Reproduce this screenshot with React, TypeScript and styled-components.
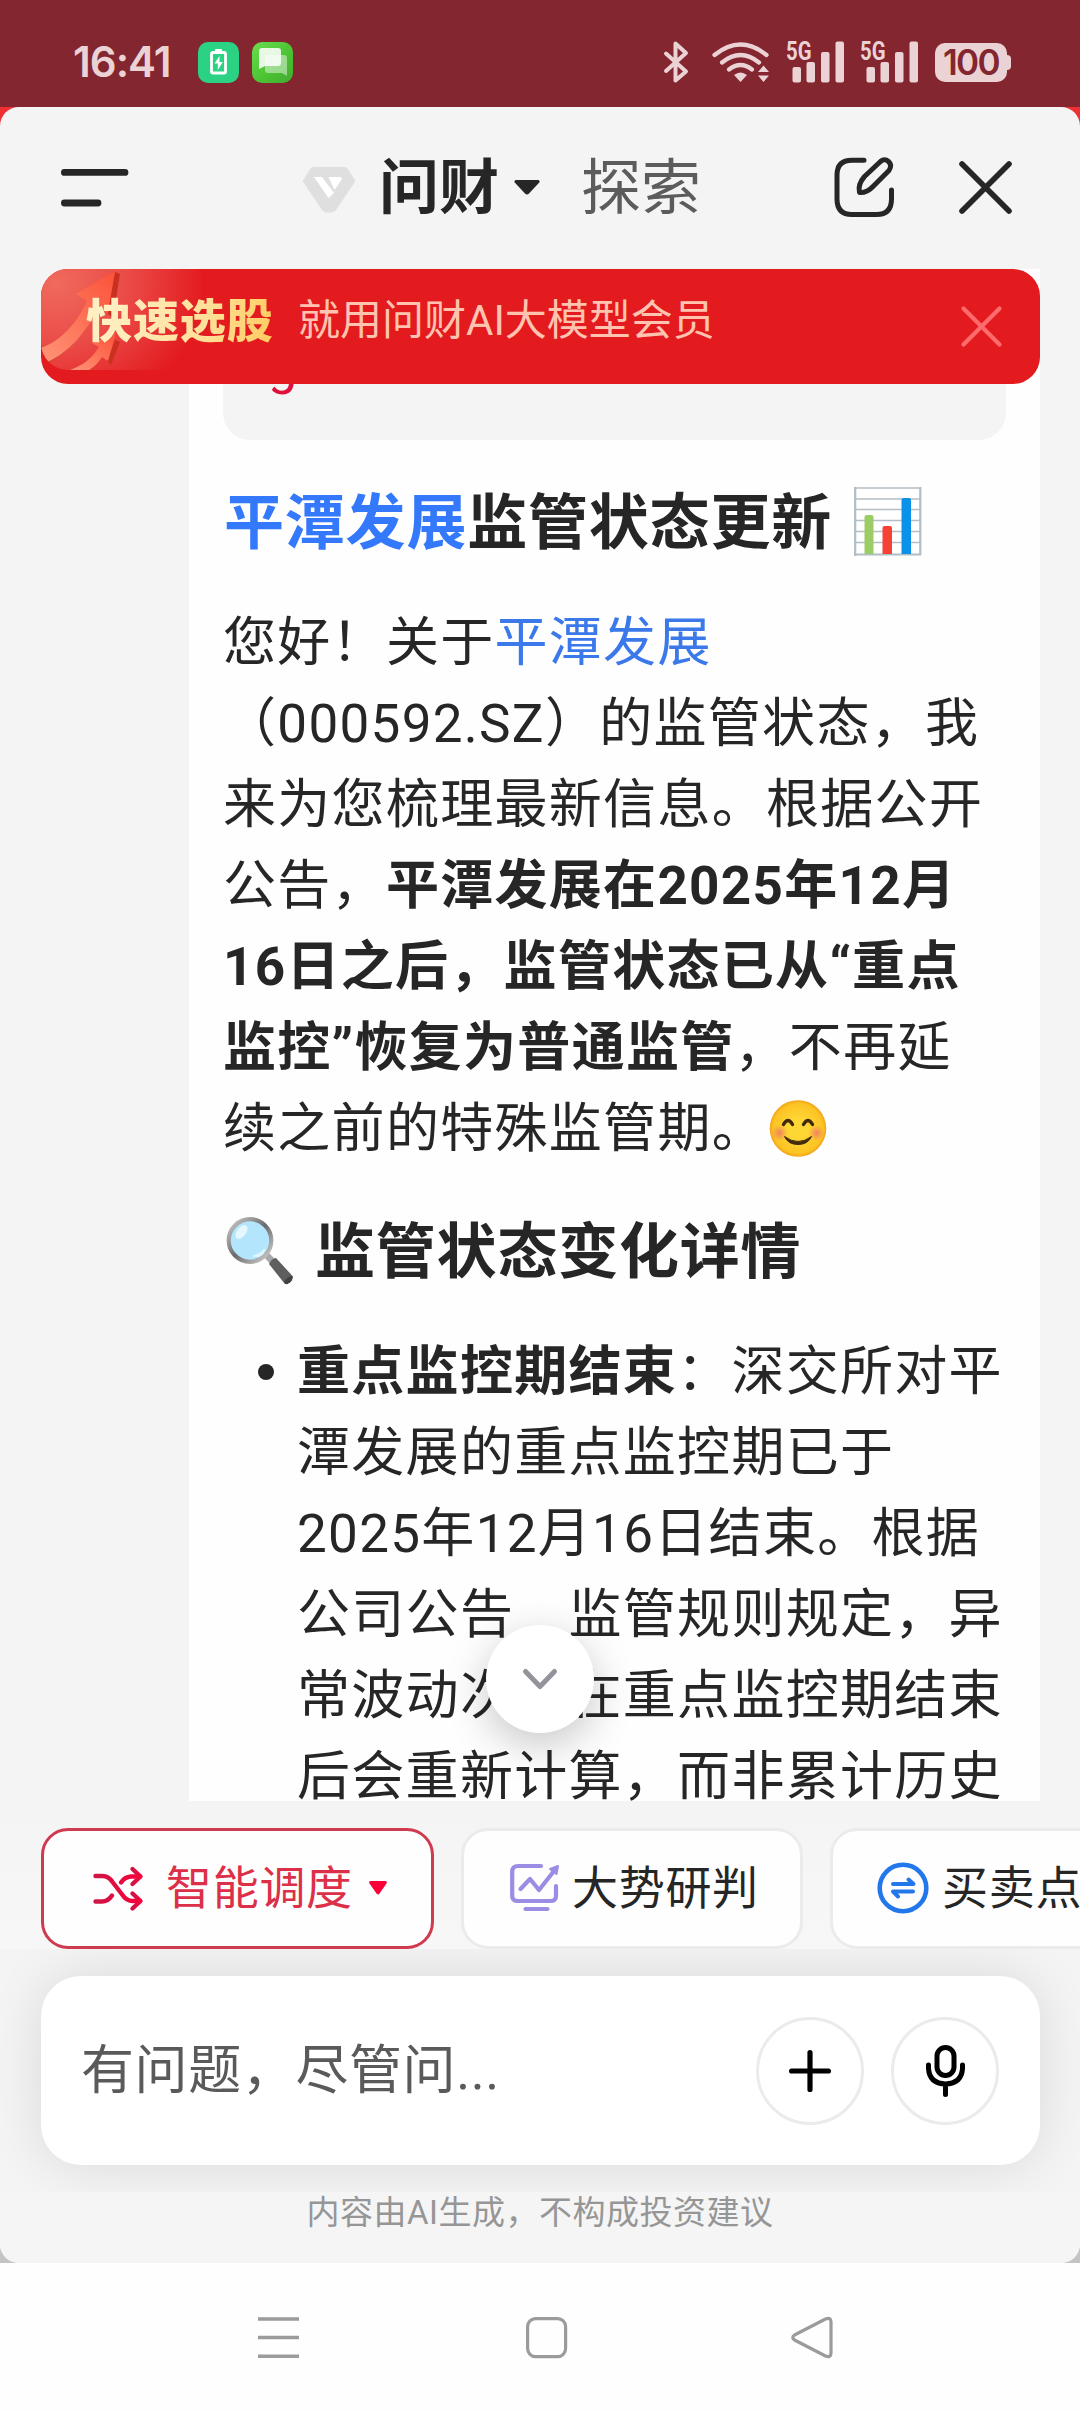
import React from 'react';
import styled, { createGlobalStyle, css } from 'styled-components';

const INK = '#262626';
const STATUS = '#ebd3d5';

const GlobalStyle = createGlobalStyle`
  *, *::before, *::after { box-sizing: border-box; }
  html, body { margin: 0; padding: 0; }
  body {
    font-family: Roboto, "Noto Sans CJK SC", sans-serif;
    color: ${INK};
    text-spacing-trim: space-all;
    -webkit-font-smoothing: antialiased;
  }
  svg { display: block; flex: none; overflow: visible; }
  h2, p, ul { margin: 0; padding: 0; }
`;

const Screen = styled.div`
  width: 1080px;
  height: 2412px;
  display: flex;
  flex-direction: column;
  overflow: hidden;
  background: #fefefe;
`;

/* ---------- status bar ---------- */
const StatusBar = styled.div`
  height: 107px;
  flex: none;
  display: flex;
  justify-content: space-between;
  padding: 41px 73px 0 73px;
  background: #83262f;
  color: ${STATUS};
`;
const StatusGroup = styled.div`
  display: flex;
  height: 42px;
  align-items: center;
`;
const Clock = styled.span`
  width: 125px;
  font: 600 42px/42px Inter, sans-serif;
  letter-spacing: -1px;
  white-space: nowrap;
`;
const AppBadge = styled.span<{ $bg: string }>`
  width: 41px;
  height: 41px;
  margin-right: 13px;
  border-radius: 10px;
  background: ${p => p.$bg};
  display: flex;
  align-items: center;
  justify-content: center;
`;
const BatteryPill = styled.span`
  position: relative;
  width: 72px;
  height: 39px;
  margin-left: 17px;
  border-radius: 10px;
  background: ${STATUS};
  color: #83262f;
  font: 600 35px/39px Inter, sans-serif;
  letter-spacing: -1.6px;
  text-align: center;
  &::after {
    content: '';
    position: absolute;
    right: -4px;
    top: 12px;
    width: 5px;
    height: 15px;
    border-radius: 0 4px 4px 0;
    background: ${STATUS};
  }
`;

/* ---------- panel ---------- */
const PanelBack = styled.div`
  flex: none;
  height: 2156px;
  background: linear-gradient(#ee2f33 0, #ee2f33 60px, #c4c4c4 61px);
`;
const Panel = styled.main`
  position: relative;
  height: 100%;
  display: flex;
  flex-direction: column;
  border-radius: 19px;
  overflow: hidden;
  background: #f4f4f4;
`;
const Header = styled.header`
  flex: none;
  height: 162px;
  display: flex;
  align-items: flex-start;
  padding: 50px 66px 0 61px;
`;
const HeaderSlot = styled.div<{ $ml: number; $mt?: number }>`
  margin-left: ${p => p.$ml}px;
  margin-top: ${p => p.$mt ?? 0}px;
`;
const Tab = styled.span<{ $active?: boolean }>`
  width: 121px;
  font-size: 60px;
  line-height: 64px;
  white-space: nowrap;
  font-weight: ${p => (p.$active ? 700 : 400)};
  color: ${p => (p.$active ? INK : '#5c5c5c')};
`;

/* ---------- promo banner ---------- */
const Banner = styled.aside`
  position: absolute;
  z-index: 3;
  left: 41px;
  top: 162px;
  width: 999px;
  height: 115px;
  display: flex;
  padding-left: 45px;
  border-radius: 27px;
  overflow: hidden;
  background: #e31b1f;
`;
const BannerArt = styled.div`
  position: absolute;
  left: 0;
  top: 0;
  width: 160px;
  height: 101px;
  border-radius: 0 0 0 27px;
  overflow: hidden;
  background: radial-gradient(ellipse 150px 130px at 14px 14px, #f06a5c 0, #ea4a46 50%, #e31b1f 100%);
`;
const BannerTitle = styled.strong`
  position: relative;
  width: 212px;
  font-size: 46px;
  line-height: 104px;
  font-weight: 900;
  letter-spacing: 0.9px;
  white-space: nowrap;
  color: transparent;
  background: linear-gradient(100deg, #fff0c4 10%, #ffe09a 55%, #ffc95c 88%);
  background-clip: text;
  -webkit-background-clip: text;
`;
const BannerText = styled.span`
  width: 663px;
  font-size: 42px;
  line-height: 104px;
  white-space: nowrap;
  color: #ffc3b0;
`;
const BannerClose = styled.div`
  padding-top: 37px;
`;

/* ---------- answer ---------- */
const Chat = styled.section`
  flex: none;
  height: 1532px;
  padding: 0 40px 0 189px;
  overflow: hidden;
`;
const Card = styled.article`
  height: 1600px;
  padding: 0 34px 0 34px;
  background: #fefefe;
`;
const Quote = styled.div`
  height: 171px;
  padding: 62px 0 0 45px;
  border-radius: 0 0 27px 27px;
  background: #f4f4f4;
  color: #e0103c;
  font-size: 52px;
  line-height: 70px;
`;
const Heading = styled.h2<{ $mt: number }>`
  display: flex;
  align-items: center;
  height: 90px;
  margin-top: ${p => p.$mt}px;
  font-size: 60px;
  line-height: 90px;
  font-weight: 700;
  letter-spacing: 0.8px;
  white-space: nowrap;
`;
const prose = css`
  font-size: 53px;
  line-height: 81px;
  letter-spacing: 1.3px;
  white-space: nowrap;
`;
const Paragraph = styled.p`
  ${prose}
  margin-top: 34px;
`;
const Line = styled.span`
  display: flex;
  align-items: center;
  white-space: pre;
`;
const Link = styled.span<{ $strong?: boolean }>`
  color: ${p => (p.$strong ? '#3478fb' : '#3b78ea')};
`;
const BulletList = styled.ul`
  ${prose}
  margin-top: 34px;
  list-style: none;
`;
const BulletItem = styled.li`
  display: flex;
  padding-left: 35px;
`;
const Dot = styled.span`
  flex: none;
  width: 16px;
  height: 16px;
  margin: 32px 23px 0 0;
  border-radius: 50%;
  background: ${INK};
`;
const ScrollDown = styled.button`
  position: absolute;
  z-index: 2;
  left: 486px;
  top: 1518px;
  width: 108px;
  height: 108px;
  padding: 0;
  border: 0;
  border-radius: 50%;
  background: #fff;
  box-shadow: 0 12px 42px rgba(0, 0, 0, 0.22);
  display: flex;
  align-items: center;
  justify-content: center;
`;

/* ---------- shortcuts ---------- */
const Chips = styled.nav`
  position: relative;
  flex: none;
  height: 148px;
  display: flex;
  gap: 27px;
  padding: 27px 0 0 41px;
  background: linear-gradient(#f4f4f4, #f7f7f7);
`;
const Chip = styled.button<{ $w: number; $pl: number; $gap: number; $active?: boolean }>`
  flex: none;
  width: ${p => p.$w}px;
  height: 121px;
  display: flex;
  align-items: center;
  gap: ${p => p.$gap}px;
  padding: 0 0 2px ${p => p.$pl}px;
  border: 3px solid ${p => (p.$active ? '#cf3a50' : '#ebebeb')};
  border-radius: 27px;
  background: #fefefe;
  color: ${p => (p.$active ? '#dc3048' : INK)};
  font-family: inherit;
  font-size: 46px;
  line-height: 60px;
  letter-spacing: 0.7px;
  white-space: nowrap;
`;

/* ---------- composer ---------- */
const ComposerWrap = styled.div`
  flex: none;
  height: 243px;
  padding: 27px 40px 0 41px;
  overflow: hidden;
`;
const Composer = styled.div`
  height: 189px;
  display: flex;
  align-items: center;
  gap: 27px;
  padding: 0 41px;
  border-radius: 40px;
  background: #fff;
  box-shadow: 0 0 54px rgba(0, 0, 0, 0.11);
`;
const Placeholder = styled.span`
  flex: 1;
  margin-left: -1px;
  font-size: 53px;
  line-height: 80px;
  letter-spacing: 0.6px;
  color: #5a5a5a;
`;
const RoundButton = styled.button`
  width: 108px;
  height: 108px;
  padding: 0;
  border: 3px solid #ebebeb;
  border-radius: 50%;
  background: #fff;
  display: flex;
  align-items: center;
  justify-content: center;
`;
const Disclaimer = styled.p`
  flex: none;
  height: 71px;
  font-size: 33px;
  line-height: 42px;
  letter-spacing: 0.5px;
  text-align: center;
  color: #969696;
  background: #f5f5f5;
`;

/* ---------- system navigation ---------- */
const SystemNav = styled.footer`
  flex: 1;
  display: flex;
  align-items: flex-start;
  gap: 225px;
  padding: 53px 0 0 257px;
  background: #fefefe;
`;

const SignalSvg = styled.svg`
  margin-left: 16px;
`;
const WifiSvg = styled.svg`
  margin-left: 24px;
`;
const CaretSvg = styled.svg`
  margin-left: -7px;
`;

const Signal = () => (
  <SignalSvg width="58" height="42" viewBox="0 0 58 42" fill={STATUS}>
    <text x="0" y="18.5" fontFamily="Roboto" fontWeight="700" fontSize="25.5" textLength="25.5" lengthAdjust="spacingAndGlyphs">5G</text>
    <rect x="6.500" y="26" width="8.500" height="15.500" rx="2" />
    <rect x="20.500" y="21" width="8.500" height="20.500" rx="2" />
    <rect x="35" y="11" width="8.500" height="30.500" rx="2" />
    <rect x="49.500" y="0.500" width="8.500" height="41" rx="2" />
  </SignalSvg>
);

const BannerArrows = () => (
  <svg width="160" height="101" viewBox="0 0 160 101">
    <defs>
      <linearGradient id="rise" x1="0" y1="1" x2="1" y2="0">
        <stop offset="0" stopColor="#ff9478" />
        <stop offset="1" stopColor="#fb5238" />
      </linearGradient>
    </defs>
    <path d="M74 3l5 2-7 44-6-5z" fill="#c9301f" />
    <path d="M8 94C28 82 42 66 54 46l-5-6C36 62 18 82 0 86z" fill="#c94a2c" />
    <path d="M0 79C20 72 36 54 46 32L35 25 74 2l-7 42-9-6C46 62 28 84 6 93l-6-8z" fill="url(#rise)" />
    <path d="M74 71l5 2-9 23-4-4z" fill="#c9301f" />
    <path d="M29 101c14-5 22-12 29-23l-7-4 24-10-8 28-6-4c-4 6-8 10-13 13z" fill="url(#rise)" />
  </svg>
);

const ChartEmoji = () => (
  <svg width="68" height="69" viewBox="0 0 68 69">
    <rect x="1" y="1" width="66" height="67" fill="#fff" />
    <path d="M0 1h67M0 12h67M0 22.500h67M0 33.500h67M0 44.500h67M0 55.500h67" stroke="#b4bec6" strokeWidth="1.400" />
    <path d="M66.300 0v68M1.200 0v69M0 67.500h67" stroke="#b0bec5" strokeWidth="2.200" />
    <path d="M10.500 67V30q0-2 2-2h5q2 0 2 2v37z" fill="#9ccc65" />
    <path d="M28.500 67V41q0-2 2-2h5.500q2 0 2 2v26z" fill="#f44336" />
    <path d="M47.500 67V13q0-2 2-2h5.500q2 0 2 2v54z" fill="#0a92ea" />
  </svg>
);

const SmileEmoji = () => (
  <svg width="58" height="57" viewBox="0 0 58 57">
    <defs>
      <radialGradient id="face" cx="0.5" cy="0.5" r="0.5">
        <stop offset="0.3" stopColor="#fdd835" />
        <stop offset="0.88" stopColor="#fcc324" />
        <stop offset="1" stopColor="#f2a31a" />
      </radialGradient>
      <radialGradient id="blush">
        <stop offset="0" stopColor="#f0776c" stopOpacity="0.85" />
        <stop offset="1" stopColor="#f0776c" stopOpacity="0" />
      </radialGradient>
    </defs>
    <circle cx="29" cy="28.500" r="28.300" fill="url(#face)" />
    <circle cx="10.500" cy="33" r="8" fill="url(#blush)" />
    <circle cx="47.500" cy="33" r="8" fill="url(#blush)" />
    <path d="M14.500 24.500q4.500-8 9 0M34.500 24.500q4.500-8 9 0" fill="none" stroke="#422b0d" strokeWidth="3.400" strokeLinecap="round" />
    <path d="M15.500 36.500Q29 46.500 42.500 36.500 39 44.500 29 44.500 19 44.500 15.500 36.500z" fill="#422b0d" stroke="#422b0d" strokeLinejoin="round" />
  </svg>
);

const LensEmoji = () => (
  <svg width="68" height="68" viewBox="0 0 68 68">
    <defs>
      <linearGradient id="rim" x1="0" y1="0" x2="1" y2="1">
        <stop offset="0" stopColor="#cfcfcf" />
        <stop offset="0.5" stopColor="#6a6a6a" />
        <stop offset="1" stopColor="#d8d8d8" />
      </linearGradient>
    </defs>
    <path d="M38 40l5-4 7 7-5 5z" fill="#a9a9a9" />
    <path d="M43 47q3-6 7-6l16.500 18q1 4-5 7.500-2 1-3 0z" fill="#5e5e5e" />
    <path d="M58 65q3-6 8.500-6 1 5-5 8-2 1-3.500-2z" fill="#424242" />
    <circle cx="24" cy="23.500" r="21.300" fill="#b3e5fc" stroke="url(#rim)" strokeWidth="4.200" />
    <ellipse cx="15.500" cy="15" rx="4.500" ry="8" transform="rotate(38 15.500 15)" fill="#e6f7ff" />
    <path d="M27 39q8-1 11.500-7-2 9-11.500 7z" fill="#e1f5fe" stroke="#e1f5fe" strokeWidth="1.500" />
  </svg>
);

export default function App() {
  return (
    <>
      <GlobalStyle />
      <Screen>
        <StatusBar>
          <StatusGroup>
            <Clock>16:41</Clock>
            <AppBadge $bg="#2bd283">
              <svg width="17" height="26" viewBox="0 0 17 26">
                <path d="M5 2.500V1q0-1 1-1h5q1 0 1 1v1.500" fill="#fff" />
                <rect x="1.500" y="3.500" width="14" height="20.500" rx="1.500" fill="none" stroke="#fff" strokeWidth="2.800" />
                <path d="M9.500 7L4.500 14.500h3.300V21l5-8H9.500z" fill="#fff" />
              </svg>
            </AppBadge>
            <AppBadge $bg="linear-gradient(135deg, #69de50, #4cc434 55%, #42aa30)">
              <svg width="28" height="28" viewBox="0 0 28 28">
                <path d="M9 7h16q3 0 3 3v18l-5-3H9q-3 0-3-3V10q0-3 3-3z" fill="#fff" opacity="0.45" />
                <path d="M3 0h16q3 0 3 3v12q0 3-3 3H6l-6 3V3q0-3 3-3z" fill="#fff" opacity="0.86" />
              </svg>
            </AppBadge>
          </StatusGroup>
          <StatusGroup>
            <svg width="24" height="42" viewBox="0 0 24 42" fill="none" stroke={STATUS} strokeWidth="4" strokeLinejoin="round" strokeLinecap="round">
              <path d="M2 12.500l20 18L11.500 39.500v-37L22 12 2 30" />
            </svg>
            <WifiSvg width="58" height="42" viewBox="0 0 58 42" fill="none" stroke={STATUS} strokeWidth="4.200" strokeLinecap="round">
              <path d="M2.500 14Q28.500-7 54.500 14M10 21.500q18.500-15 37 0M17 28.500q11.500-9 23 0" />
              <path d="M22 34q6.500-5 13 0l-6.500 7z" fill={STATUS} stroke="none" />
              <path d="M46 31l5.500-6.500L57 31zM46 34.500h11L51.500 41z" fill={STATUS} stroke="none" />
            </WifiSvg>
            <Signal />
            <Signal />
            <BatteryPill>100</BatteryPill>
          </StatusGroup>
        </StatusBar>

        <PanelBack>
          <Panel>
            <Header>
              <HeaderSlot $ml={0} $mt={12}>
                <svg width="68" height="38" viewBox="0 0 68 38" stroke={INK} strokeWidth="6.800" strokeLinecap="round">
                  <path d="M3.400 3.400H64M3.400 34H37" />
                </svg>
              </HeaderSlot>
              <HeaderSlot $ml={174} $mt={10}>
                <svg width="52" height="46" viewBox="0 0 52 46">
                  <path d="M10.500 0h31q2 0 3 1.500l7 11q1 1.500 0 3L33 43q-2 2.500-5 2.500h-4q-3 0-5-2.500L.500 15.500q-1-1.500 0-3l7-11q1-1.500 3-1.500z" fill="#dfdfdf" />
                  <path d="M11 10h8l12 16-5.500 5zM25.500 10H37q2.500 0 1.500 3l-7 10z" fill="#fff" />
                </svg>
              </HeaderSlot>
              <HeaderSlot $ml={24}>
                <Tab $active>问财</Tab>
              </HeaderSlot>
              <HeaderSlot $ml={15} $mt={23}>
                <svg width="26" height="15" viewBox="0 0 26 15" fill={INK}>
                  <path d="M1.500 0h23q2 1 .8 2.500L15 13.500q-2 1.800-4 0L.700 2.500Q-.500 1 1.500 0z" />
                </svg>
              </HeaderSlot>
              <HeaderSlot $ml={41}>
                <Tab>探索</Tab>
              </HeaderSlot>
              <HeaderSlot $ml={133}>
                <svg width="61" height="61" viewBox="0 0 61 61" fill="none" stroke={INK} strokeWidth="5" strokeLinecap="round" strokeLinejoin="round">
                  <path d="M30 3.200H18Q3 3.200 3 18v24q0 15.500 15 15.500h24.500q15 0 15-15.500V33" />
                  <path d="M25.500 35.500q-2-8 5-16L46.500 4.500q4-3.500 8 0t.500 9L39 29.500q-6 6.500-13.500 6z" />
                </svg>
              </HeaderSlot>
              <HeaderSlot $ml={64} $mt={4}>
                <svg width="53" height="53" viewBox="0 0 53 53" fill="none" stroke={INK} strokeWidth="5.600" strokeLinecap="round">
                  <path d="M3 3l47 47M50 3L3 50" />
                </svg>
              </HeaderSlot>
            </Header>

            <Banner>
              <BannerArt>
                <BannerArrows />
              </BannerArt>
              <BannerTitle>快速选股</BannerTitle>
              <BannerText>就用问财AI大模型会员</BannerText>
              <BannerClose>
                <svg width="41" height="41" viewBox="0 0 41 41" fill="none" stroke="#ff6b6d" strokeWidth="4.200" strokeLinecap="round">
                  <path d="M2.500 2.500l36 36M38.500 2.500l-36 36" />
                </svg>
              </BannerClose>
            </Banner>

            <Chat>
              <Card>
                <Quote>g</Quote>
                <Heading $mt={39}>
                  <HeaderSlot $ml={1}>
                    <Link $strong>平潭发展</Link>监管状态更新
                  </HeaderSlot>
                  <HeaderSlot $ml={22} $mt={-5}>
                    <ChartEmoji />
                  </HeaderSlot>
                </Heading>
                <Paragraph>
                  <Line>您好！关于<Link>平潭发展</Link></Line>
                  <Line>（000592.SZ）的监管状态，我</Line>
                  <Line>来为您梳理最新信息。根据公开</Line>
                  <Line>公告，<b>平潭发展在2025年12月</b></Line>
                  <Line><b>16日之后，监管状态已从“重点</b></Line>
                  <Line><b>监控”恢复为普通监管</b>，不再延</Line>
                  <Line>
                    续之前的特殊监管期。
                    <HeaderSlot $ml={3} $mt={-3}>
                      <SmileEmoji />
                    </HeaderSlot>
                  </Line>
                </Paragraph>
                <Heading $mt={38}>
                  <HeaderSlot $ml={3} $mt={-5}>
                    <LensEmoji />
                  </HeaderSlot>
                  <HeaderSlot $ml={21}>监管状态变化详情</HeaderSlot>
                </Heading>
                <BulletList>
                  <BulletItem>
                    <Dot />
                    <div>
                      <Line><b>重点监控期结束</b>：深交所对平</Line>
                      <Line>潭发展的重点监控期已于</Line>
                      <Line>2025年12月16日结束。根据</Line>
                      <Line>公司公告　监管规则规定，异</Line>
                      <Line>常波动次数在重点监控期结束</Line>
                      <Line>后会重新计算，而非累计历史</Line>
                    </div>
                  </BulletItem>
                </BulletList>
              </Card>
            </Chat>

            <ScrollDown aria-label="scroll down">
              <svg width="34" height="21" viewBox="0 0 34 21" fill="none" stroke="#92939b" strokeWidth="5" strokeLinecap="round" strokeLinejoin="round">
                <path d="M2.500 2.500L17 17.500l14.500-15" />
              </svg>
            </ScrollDown>

            <Chips>
              <Chip $w={393} $pl={49} $gap={23} $active>
                <svg width="50" height="44" viewBox="0 0 50 44" fill="none" strokeWidth="4.400" strokeLinecap="round" strokeLinejoin="round">
                  <defs>
                    <linearGradient id="mix" x1="0" y1="0" x2="1" y2="0">
                      <stop offset="0" stopColor="#cc1745" />
                      <stop offset="1" stopColor="#fb003c" />
                    </linearGradient>
                  </defs>
                  <g stroke="url(#mix)">
                    <path d="M2.500 10h7q6 0 10 6l10 13q4 6 10 6h7M2.500 35.500H9q6 0 10-6M28 16.500q3.500-5.500 10-6h9" />
                    <path d="M39.500 3l8 7.500-8 7.500M39.500 27.500l8 7.500-8 7.500" />
                  </g>
                </svg>
                智能调度
                <CaretSvg width="18" height="14" viewBox="0 0 18 14" fill="#fb0038">
                  <path d="M1.500 0h15q2 .500 1 2.500L10.500 12.500q-1.500 2-3 0L.500 2.500Q-.500.500 1.500 0z" />
                </CaretSvg>
              </Chip>
              <Chip $w={342} $pl={46} $gap={12}>
                <svg width="50" height="49" viewBox="0 0 50 49" fill="none" stroke="#9a8de4" strokeWidth="4.200" strokeLinecap="round" strokeLinejoin="round">
                  <path d="M31 3H8Q2.200 3 2.200 9v24q0 5 5.800 5h32.500q5.500 0 5.500-5V23M15.500 46h22" />
                  <path d="M10.500 26l9.500-10 9 11L44 8" />
                  <path d="M40 6l8-3-1.500 8z" fill="#9a8de4" strokeWidth="2" />
                </svg>
                大势研判
              </Chip>
              <Chip $w={342} $pl={44} $gap={13}>
                <svg width="52" height="52" viewBox="0 0 52 52" fill="none" stroke="#2277ea" strokeWidth="4.600" strokeLinecap="round" strokeLinejoin="round">
                  <circle cx="26" cy="26" r="23.300" />
                  <path d="M16 22h20.500l-5-4.500M36 29.500H16l5 5" strokeWidth="4" />
                </svg>
                买卖点
              </Chip>
            </Chips>

            <ComposerWrap>
              <Composer>
                <Placeholder>有问题，尽管问...</Placeholder>
                <RoundButton aria-label="add">
                  <svg width="42" height="42" viewBox="0 0 42 42" stroke="#000" strokeWidth="5.200" strokeLinecap="round">
                    <path d="M21 2.600v36.800M2.600 21h36.800" />
                  </svg>
                </RoundButton>
                <RoundButton aria-label="voice">
                  <svg width="39" height="52" viewBox="0 0 39 52" fill="none" stroke="#000" strokeWidth="5" strokeLinecap="round">
                    <rect x="11" y="2.500" width="17" height="28" rx="8.500" />
                    <path d="M2.500 20v3.500q1 15 17 15.500 16-.500 17-15.500V20M19.500 39v10.500" />
                  </svg>
                </RoundButton>
              </Composer>
            </ComposerWrap>
            <Disclaimer>内容由AI生成，不构成投资建议</Disclaimer>
          </Panel>
        </PanelBack>

        <SystemNav>
          <svg width="43" height="43" viewBox="0 0 43 43" stroke="#9b9b9b" strokeWidth="3.400">
            <path d="M1 3h41M1 21.500h41M1 40.300h41" />
          </svg>
          <svg width="43" height="43" viewBox="0 0 43 43" fill="none" stroke="#9b9b9b" strokeWidth="3.200">
            <rect x="2.600" y="2.600" width="38" height="38" rx="8" />
          </svg>
          <svg width="43" height="43" viewBox="0 0 43 43" fill="none" stroke="#9b9b9b" strokeWidth="3.200" strokeLinejoin="round">
            <path d="M1.500 19L32.500 3Q38 1 38 6v31q0 5-5.500 3L1.500 24q-3.500-2.500 0-5z" />
          </svg>
        </SystemNav>
      </Screen>
    </>
  );
}
